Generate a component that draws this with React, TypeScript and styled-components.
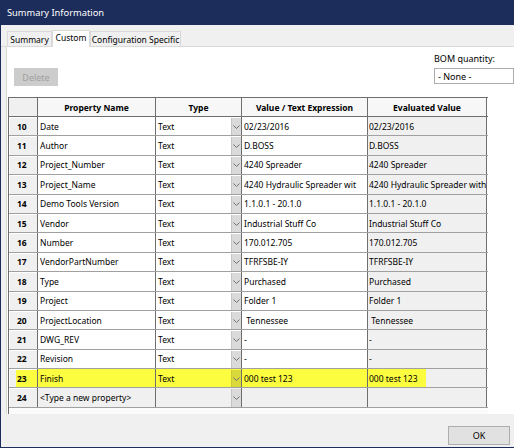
import React from "react";
import styled, { createGlobalStyle } from "styled-components";

const GlobalStyle = createGlobalStyle`
  html, body {
    margin: 0;
    padding: 0;
    background: #f0f0f0;
  }
  body {
    font-family: "Noto Sans", "DejaVu Sans", sans-serif;
    font-size: 8.5px;
    color: #000;
  }
`;

const Window = styled.div`
  width: 514px;
  height: 448px;
  box-sizing: border-box;
  border-left: 1px solid #1d2d5b;
  border-bottom: 1px solid #1d2d5b;
  background: #f0f0f0;
  display: flex;
  flex-direction: column;
  overflow: hidden;
`;

const TitleBar = styled.div`
  height: 25px;
  flex: none;
  background: #1d2d5b;
  color: #fff;
  font-size: 9.3px;
  display: flex;
  align-items: center;
  padding-left: 6px;
`;

const TabStrip = styled.div`
  height: 22px;
  flex: none;
  display: flex;
  align-items: flex-end;
  padding-left: 6px;
  border-bottom: 1px solid #d9d9d9;
  box-sizing: border-box;
`;

const Tab = styled.div<{ $active?: boolean; $w: number }>`
  width: ${(p) => p.$w}px;
  height: ${(p) => (p.$active ? "17px" : "15px")};
  box-sizing: border-box;
  display: flex;
  align-items: center;
  justify-content: center;
  border: 1px solid #d9d9d9;
  border-bottom: none;
  background: ${(p) => (p.$active ? "#fff" : "#f0f0f0")};
  margin-bottom: ${(p) => (p.$active ? "-1px" : "0")};
  padding-bottom: ${(p) => (p.$active ? "3px" : "0")};
  white-space: nowrap;
`;

const Panel = styled.div`
  margin-left: 5px;
  height: 367px;
  flex: none;
  background: #fff;
  border-left: 1px solid #d9d9d9;
  display: flex;
  flex-direction: column;
`;

const Toolbar = styled.div`
  height: 50px;
  flex: none;
  display: flex;
  align-items: flex-end;
  padding: 0 0 11px 7px;
  box-sizing: border-box;
`;

const DeleteButton = styled.div`
  width: 73px;
  height: 18px;
  background: #cccccc;
  color: #a0a0a0;
  display: flex;
  align-items: center;
  justify-content: center;
  font-size: 9px;
`;

const BomGroup = styled.div`
  margin-left: 376px;
  display: flex;
  flex-direction: column;
  gap: 3px;
  padding-bottom: 2px;
  white-space: nowrap;
  font-size: 9px;
`;

const SelectBox = styled.div`
  width: 80px;
  height: 16px;
  box-sizing: border-box;
  border: 1px solid #adadad;
  background: #fff;
  padding-left: 3px;
  display: flex;
  align-items: center;
`;

const GridFrame = styled.div`
  margin-left: 1px;
  width: 479px;
  border-left: 1px solid #6e6e6e;
  border-top: 1px solid #6e6e6e;
  flex: 1;
  display: flex;
  flex-direction: column;
`;

const cols = "29px 118px 86px 126px 119px";

const HeaderRow = styled.div`
  display: grid;
  grid-template-columns: ${cols};
  height: 19px;
  box-sizing: border-box;
  border-bottom: 1px solid #6e6e6e;
`;

const HeaderCell = styled.div<{ $corner?: boolean }>`
  border-right: 1px solid #6e6e6e;
  background: ${(p) => (p.$corner ? "#f0f0f0" : "#f7f7f7")};
  font-weight: bold;
  display: flex;
  align-items: center;
  justify-content: center;
  white-space: nowrap;
`;

const Row = styled.div`
  display: grid;
  grid-template-columns: ${cols};
  height: 19.4px;
  box-sizing: border-box;
  border-bottom: 1px solid #a0a0a0;
`;

const NumCell = styled.div<{ $hl?: boolean }>`
  border-right: 1px solid #6e6e6e;
  background: ${(p) =>
    p.$hl
      ? "linear-gradient(to right, #f0f0f0 7px, #fdfd40 7px)"
      : "#f0f0f0"};
  box-shadow: inset 1px 1px 0 #fff;
  font-weight: bold;
  padding-left: 8px;
  display: flex;
  align-items: center;
`;

const Cell = styled.div<{ $bg: string; $pad?: number }>`
  border-right: 1px solid #6e6e6e;
  background: ${(p) => p.$bg};
  padding-left: ${(p) => p.$pad ?? 2}px;
  display: flex;
  align-items: center;
  white-space: pre;
  overflow: hidden;
`;

const TypeCell = styled.div<{ $bg: string }>`
  border-right: 1px solid #6e6e6e;
  background: ${(p) => p.$bg};
  display: flex;
  align-items: stretch;
`;

const TypeText = styled.div`
  flex: 1;
  padding-left: 2px;
  display: flex;
  align-items: center;
`;

const DropButton = styled.div<{ $hl?: boolean }>`
  width: 9px;
  margin: 1px 0 0;
  background: ${(p) => (p.$hl ? "#d9d93c" : "#dadada")};
  border-left: 1px solid ${(p) => (p.$hl ? "#c8c83a" : "#c4c4c4")};
  display: flex;
  align-items: center;
  justify-content: center;
`;

const Highlight = styled.span`
  background: #fdfd40;
  align-self: stretch;
  display: flex;
  align-items: center;
  padding-right: 8px;
  margin-left: -1px;
  padding-left: 1px;
`;

const GridTail = styled.div`
  flex: 1;
  background: #fbfbfb;
`;

const Footer = styled.div`
  flex: 1;
  display: flex;
  justify-content: flex-end;
  align-items: flex-start;
  padding: 12px 4px 0 0;
`;

const OkButton = styled.div`
  width: 62px;
  height: 19px;
  box-sizing: border-box;
  background: #e1e1e1;
  border: 1px solid #adadad;
  display: flex;
  align-items: center;
  justify-content: center;
  font-size: 9px;
`;

const Chevron = () => (
  <svg width="7" height="4" viewBox="0 0 7 4">
    <path d="M0.5 0.5 L3.5 3.5 L6.5 0.5" fill="none" stroke="#707070" strokeWidth="1" />
  </svg>
);

type Prop = {
  n: number;
  name: string;
  type: string;
  value: string;
  evaluated: string;
  hl?: boolean;
  blank?: boolean;
};

const props: Prop[] = [
  { n: 10, name: "Date", type: "Text", value: "02/23/2016", evaluated: "02/23/2016" },
  { n: 11, name: "Author", type: "Text", value: "D.BOSS", evaluated: "D.BOSS" },
  { n: 12, name: "Project_Number", type: "Text", value: "4240 Spreader", evaluated: "4240 Spreader" },
  { n: 13, name: "Project_Name", type: "Text", value: "4240 Hydraulic Spreader wit", evaluated: "4240 Hydraulic Spreader with" },
  { n: 14, name: "Demo Tools Version", type: "Text", value: "1.1.0.1 - 20.1.0", evaluated: "1.1.0.1 - 20.1.0" },
  { n: 15, name: "Vendor", type: "Text", value: "Industrial Stuff Co", evaluated: "Industrial Stuff Co" },
  { n: 16, name: "Number", type: "Text", value: "170.012.705", evaluated: "170.012.705" },
  { n: 17, name: "VendorPartNumber", type: "Text", value: "TFRFSBE-IY", evaluated: "TFRFSBE-IY" },
  { n: 18, name: "Type", type: "Text", value: "Purchased", evaluated: "Purchased" },
  { n: 19, name: "Project", type: "Text", value: "Folder 1", evaluated: "Folder 1" },
  { n: 20, name: "ProjectLocation", type: "Text", value: " Tennessee", evaluated: " Tennessee" },
  { n: 21, name: "DWG_REV", type: "Text", value: "-", evaluated: "-" },
  { n: 22, name: "Revision", type: "Text", value: "-", evaluated: "-" },
  { n: 23, name: "Finish", type: "Text", value: "000 test 123", evaluated: "000 test 123", hl: true },
  { n: 24, name: "<Type a new property>", type: "", value: "", evaluated: "", blank: true },
];

const App: React.FC = () => {
  return (
    <>
      <GlobalStyle />
      <Window>
        <TitleBar>Summary Information</TitleBar>
        <TabStrip>
          <Tab $w={45}>Summary</Tab>
          <Tab $active $w={38}>Custom</Tab>
          <Tab $w={91}>Configuration Specific</Tab>
        </TabStrip>
        <Panel>
          <Toolbar>
            <DeleteButton>Delete</DeleteButton>
            <BomGroup>
              <span>BOM quantity:</span>
              <SelectBox>- None -</SelectBox>
            </BomGroup>
          </Toolbar>
          <GridFrame>
            <HeaderRow>
              <HeaderCell $corner />
              <HeaderCell>Property Name</HeaderCell>
              <HeaderCell>Type</HeaderCell>
              <HeaderCell>Value / Text Expression</HeaderCell>
              <HeaderCell>Evaluated Value</HeaderCell>
            </HeaderRow>
            {props.map((p) => {
              const white = p.hl ? "#fdfd40" : p.blank ? "#f0f0f0" : "#fff";
              return (
                <Row key={p.n}>
                  <NumCell $hl={p.hl}>{p.n}</NumCell>
                  <Cell $bg={white}>{p.name}</Cell>
                  <TypeCell $bg={white}>
                    <TypeText>{p.type}</TypeText>
                    <DropButton $hl={p.hl}>
                      <Chevron />
                    </DropButton>
                  </TypeCell>
                  <Cell $bg={white}>{p.value}</Cell>
                  <Cell $bg="#f0f0f0" $pad={1}>
                    {p.hl ? <Highlight>{p.evaluated}</Highlight> : p.evaluated}
                  </Cell>
                </Row>
              );
            })}
            <GridTail />
          </GridFrame>
        </Panel>
        <Footer>
          <OkButton>OK</OkButton>
        </Footer>
      </Window>
    </>
  );
};

export default App;
